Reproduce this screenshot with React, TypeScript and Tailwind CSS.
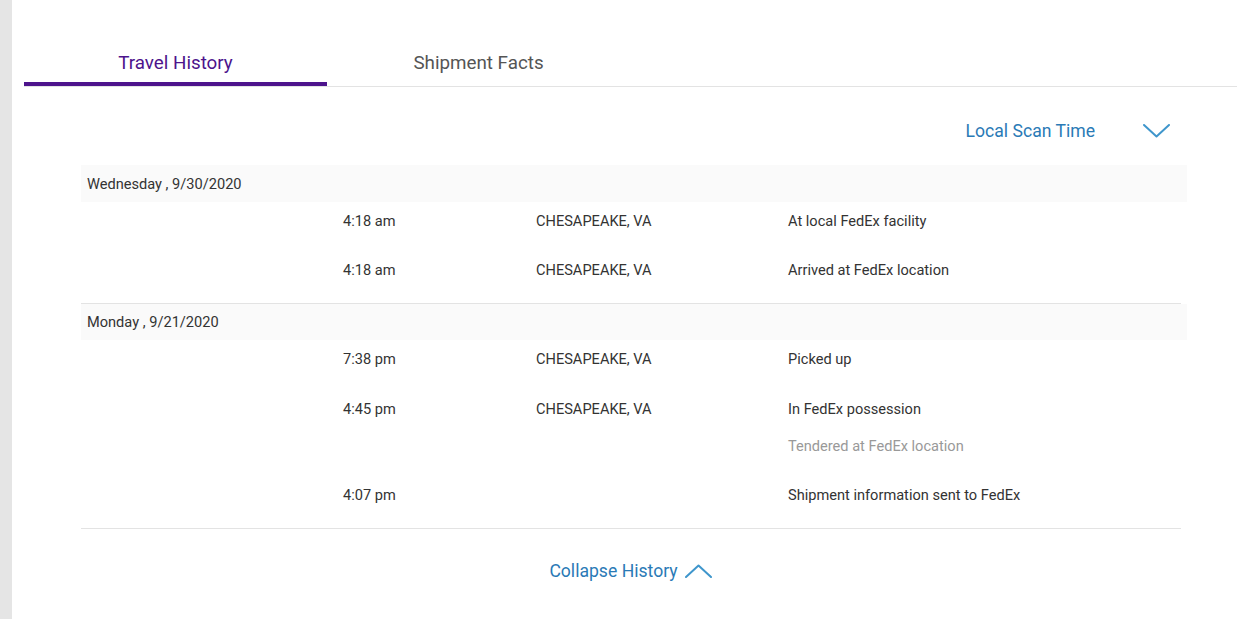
import { Fragment } from "react";

type Scan = { time: string; location: string; status: string; note?: string };
type Day = { date: string; scans: Scan[] };

const days: Day[] = [
  {
    date: "Wednesday , 9/30/2020",
    scans: [
      { time: "4:18 am", location: "CHESAPEAKE, VA", status: "At local FedEx facility" },
      { time: "4:18 am", location: "CHESAPEAKE, VA", status: "Arrived at FedEx location" },
    ],
  },
  {
    date: "Monday , 9/21/2020",
    scans: [
      { time: "7:38 pm", location: "CHESAPEAKE, VA", status: "Picked up" },
      {
        time: "4:45 pm",
        location: "CHESAPEAKE, VA",
        status: "In FedEx possession",
        note: "Tendered at FedEx location",
      },
      { time: "4:07 pm", location: "", status: "Shipment information sent to FedEx" },
    ],
  },
];

function Chevron({ up = false }: { up?: boolean }) {
  return (
    <svg width="27" height="14" viewBox="0 0 27 14" fill="none">
      <path
        d={up ? "M1 13 L13.5 1.5 L26 13" : "M1 1 L13.5 12.5 L26 1"}
        stroke="#3f96cc"
        strokeWidth="2"
        strokeLinecap="round"
        strokeLinejoin="round"
      />
    </svg>
  );
}

export default function App() {
  return (
    <div
      className="flex h-[619px] w-[1240px] overflow-hidden bg-white text-[#333]"
      style={{ fontFamily: "Roboto, 'Liberation Sans', sans-serif" }}
    >
      {/* left gutter */}
      <div className="w-[12px] shrink-0 bg-[#e5e5e5]" />

      <div className="flex flex-1 flex-col pl-[12px] pr-[3px] pt-[48px]">
        {/* Tabs */}
        <div className="flex border-b border-[#e3e3e3]">
          <div className="flex h-[38px] w-[303px] items-start justify-center border-b-4 border-[#4d148c] pt-[1px] text-[18.8px] leading-[28px] text-[#4d148c]">
            Travel History
          </div>
          <div className="flex h-[38px] w-[303px] items-start justify-center pt-[1px] text-[18.8px] leading-[28px] text-[#555]">
            Shipment Facts
          </div>
        </div>

        {/* Scan time selector */}
        <div className="flex items-center justify-end gap-[48px] pr-[67px] pt-[32px]">
          <span className="text-[17.6px] leading-[24px] text-[#2a7ab6]">Local Scan Time</span>
          <Chevron />
        </div>

        {/* History table */}
        <div className="mt-[22px] ml-[57px] mr-[50px] text-[14.6px] leading-[20px]">
          {days.map((day, i) => (
            <Fragment key={day.date}>
              <div
                className={`flex items-center bg-[#fafafa] pl-[6px] text-[#333] ${
                  i === 0 ? "h-[37px]" : "h-[36px]"
                }`}
              >
                {day.date}
              </div>
              <div
                className={`mr-[6px] flex flex-col border-b border-[#e3e3e3] pt-[9px] pb-[23px] ${
                  i === 0 ? "gap-[29px]" : "gap-[30px]"
                }`}
              >
                {day.scans.map((s, j) => (
                  <div key={j} className="flex">
                    <div className="w-[262px] shrink-0" />
                    <div className="w-[193px] shrink-0">{s.time}</div>
                    <div className="w-[252px] shrink-0">{s.location}</div>
                    <div className="flex flex-col gap-[17px]">
                      <span>{s.status}</span>
                      {s.note && <span className="-mb-px text-[#999]">{s.note}</span>}
                    </div>
                  </div>
                ))}
              </div>
            </Fragment>
          ))}
        </div>

        {/* Collapse */}
        <div className="flex items-center justify-center gap-[7px] pt-[30px]">
          <span className="text-[17.6px] leading-[24px] text-[#2a7ab6]">Collapse History</span>
          <Chevron up />
        </div>
      </div>
    </div>
  );
}
